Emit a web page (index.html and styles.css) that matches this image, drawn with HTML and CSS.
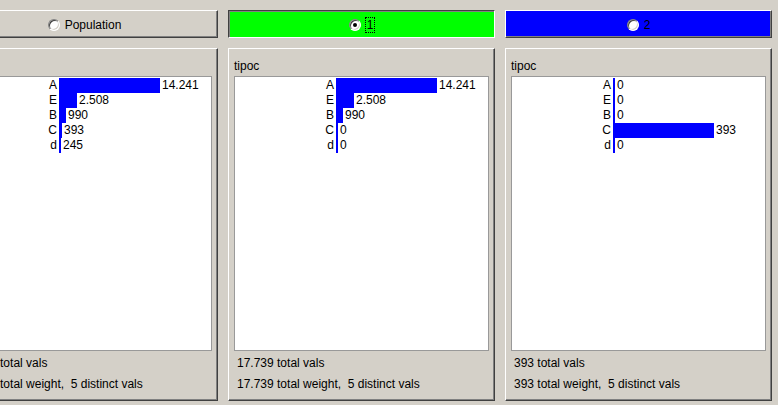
FILE: index.html
```html
<!DOCTYPE html>
<html>
<head>
<meta charset="utf-8">
<link rel="stylesheet" href="styles.css">
</head>
<body>
<div class="app">
  <div class="btn raised">
    <span class="radio"></span><span class="btn-label">Population</span>
  </div>
  <div class="btn pressed green">
    <span class="radio checked"></span><span class="btn-label focus">1</span>
  </div>
  <div class="btn raised blue">
    <span class="radio"></span><span class="btn-label">2</span>
  </div>

  <div class="panel raised">
    <div class="title">tipoc</div>
    <div class="chart">
      <div class="row"><span class="lbl">A</span><span class="bar" style="width:101px"></span><span class="val">14.241</span></div>
      <div class="row"><span class="lbl">E</span><span class="bar" style="width:18px"></span><span class="val">2.508</span></div>
      <div class="row"><span class="lbl">B</span><span class="bar" style="width:7px"></span><span class="val">990</span></div>
      <div class="row"><span class="lbl">C</span><span class="bar" style="width:3px"></span><span class="val">393</span></div>
      <div class="row"><span class="lbl">d</span><span class="bar" style="width:2px"></span><span class="val">245</span></div>
    </div>
    <div class="foots">
      <div class="foot">17.739 total vals</div>
      <div class="foot">17.739 total weight,  5 distinct vals</div>
    </div>
  </div>

  <div class="panel raised">
    <div class="title">tipoc</div>
    <div class="chart">
      <div class="row"><span class="lbl">A</span><span class="bar" style="width:101px"></span><span class="val">14.241</span></div>
      <div class="row"><span class="lbl">E</span><span class="bar" style="width:18px"></span><span class="val">2.508</span></div>
      <div class="row"><span class="lbl">B</span><span class="bar" style="width:7px"></span><span class="val">990</span></div>
      <div class="row"><span class="lbl">C</span><span class="bar" style="width:2px"></span><span class="val">0</span></div>
      <div class="row"><span class="lbl">d</span><span class="bar" style="width:2px"></span><span class="val">0</span></div>
    </div>
    <div class="foots">
      <div class="foot">17.739 total vals</div>
      <div class="foot">17.739 total weight,  5 distinct vals</div>
    </div>
  </div>

  <div class="panel raised">
    <div class="title">tipoc</div>
    <div class="chart">
      <div class="row"><span class="lbl">A</span><span class="bar" style="width:2px"></span><span class="val">0</span></div>
      <div class="row"><span class="lbl">E</span><span class="bar" style="width:2px"></span><span class="val">0</span></div>
      <div class="row"><span class="lbl">B</span><span class="bar" style="width:2px"></span><span class="val">0</span></div>
      <div class="row"><span class="lbl">C</span><span class="bar" style="width:101px"></span><span class="val">393</span></div>
      <div class="row"><span class="lbl">d</span><span class="bar" style="width:2px"></span><span class="val">0</span></div>
    </div>
    <div class="foots">
      <div class="foot">393 total vals</div>
      <div class="foot">393 total weight,  5 distinct vals</div>
    </div>
  </div>
</div>
</body>
</html>
```

FILE: styles.css
```css
html, body {
  margin: 0;
  padding: 0;
  background: #d4d0c8;
  overflow: hidden;
}
body {
  font-family: "Liberation Sans", Arial, sans-serif;
  font-size: 12px;
  color: #000;
}
.app {
  display: grid;
  grid-template-columns: repeat(3, 267px);
  grid-template-rows: 28px 353px;
  column-gap: 10px;
  row-gap: 10px;
  padding-top: 10px;
  margin-left: -49px;
  width: 821px;
}
.raised {
  box-sizing: border-box;
  border: 1px solid;
  border-color: #fff #404040 #404040 #fff;
  box-shadow: inset -1px -1px 0 #808080;
}
.pressed {
  box-sizing: border-box;
  border: 1px solid;
  border-color: #404040 #fff #fff #404040;
  box-shadow: inset 1px 1px 0 #808080;
}
.btn {
  display: flex;
  align-items: center;
  justify-content: center;
  gap: 5px;
  background: #d4d0c8;
  padding-top: 1px;
}
.green { background: #00ff00; }
.blue { background: #0000ff; }
.btn-label {
  line-height: 14px;
}
.focus {
  outline: 1px dotted #000;
  outline-offset: 0;
  padding: 0 1px;
}
.radio {
  position: relative;
  width: 12px;
  height: 12px;
  box-sizing: border-box;
  border-radius: 50%;
  border: 1px solid;
  border-color: #808080 #fff #fff #808080;
  background: #fff;
  box-shadow: inset 1px 1px 0 #404040, inset -1px -1px 0 #d4d0c8;
  flex: none;
}
.radio.checked::after {
  content: "";
  position: absolute;
  left: 3px;
  top: 3px;
  width: 4px;
  height: 4px;
  border-radius: 50%;
  background: #000;
}
.panel {
  display: flex;
  flex-direction: column;
  padding: 10px 5px 5px 5px;
  background: #d4d0c8;
}
.title {
  line-height: 15px;
  margin-bottom: 2px;
}
.chart {
  height: 275px;
  box-sizing: border-box;
  border: 1px solid #999;
  background: #fff;
  padding-top: 1px;
  flex: none;
}
.row {
  display: flex;
  align-items: stretch;
  height: 15px;
  line-height: 15px;
}
.lbl {
  width: 101px;
  box-sizing: border-box;
  padding-right: 2px;
  text-align: right;
  flex: none;
}
.bar {
  background: #0000ff;
  flex: none;
}
.val {
  margin-left: 2px;
}
.foots {
  padding-top: 2px;
}
.foot {
  line-height: 21px;
  padding-left: 3px;
  white-space: pre;
}
```
